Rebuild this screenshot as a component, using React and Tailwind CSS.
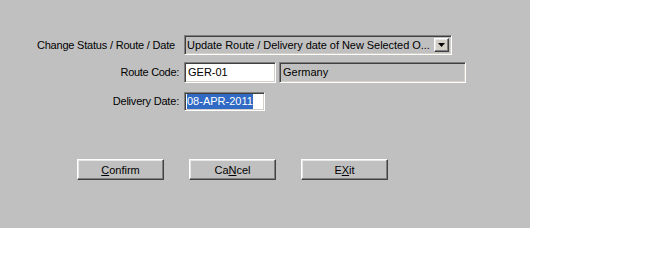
import React from "react";

const sunken =
  "border border-t-[#808080] border-l-[#808080] border-b-white border-r-white shadow-[inset_1px_1px_0_#404040,inset_-1px_-1px_0_#d4d0c8]";
const raised =
  "border border-t-white border-l-white border-b-[#404040] border-r-[#404040] shadow-[inset_-1px_-1px_0_#808080,inset_1px_1px_0_#e8e8e8]";

function Btn({ children }) {
  return (
    <button
      className={`w-[87px] h-[21px] bg-[#c0c0c0] ${raised} text-[11px] text-black flex items-center justify-center pt-[1px]`}
    >
      {children}
    </button>
  );
}

export default function App() {
  return (
    <div className="w-[667px] h-[255px] bg-white" style={{ fontFamily: '"Liberation Sans", Arial, sans-serif' }}>
      <div className="w-[530px] h-[228px] bg-[#c0c0c0] pt-[35px] text-[11px] text-black">
        <div className="flex items-center h-[20px]">
          <div className="w-[176px] text-right pr-[1px] tracking-[-0.2px]">Change Status / Route / Date</div>
          <div className={`ml-[8px] w-[268px] h-[20px] bg-[#c0c0c0] ${sunken} flex items-center pl-[2px] pr-[2px]`}>
            <span className="flex-1 whitespace-nowrap overflow-hidden tracking-[-0.05px]">Update Route / Delivery date of New Selected O...</span>
            <div className={`w-[15px] h-[14px] bg-[#d4d0c8] ${raised} flex items-center justify-center`}>
              <svg width="7" height="4" viewBox="0 0 7 4"><path d="M0 0h7L3.5 4z" fill="#000" /></svg>
            </div>
          </div>
        </div>
        <div className="flex items-center h-[21px] mt-[7px]">
          <div className="w-[179px] text-right tracking-[-0.3px]">Route Code:</div>
          <div className={`ml-[5px] w-[92px] h-[21px] bg-white ${sunken} flex items-center pl-[3px]`}>GER-01</div>
          <div className={`ml-[3px] w-[187px] h-[21px] bg-[#c0c0c0] ${sunken} flex items-center pl-[3px]`}>Germany</div>
        </div>
        <div className="flex items-center h-[19px] mt-[9px]">
          <div className="w-[179px] text-right tracking-[-0.2px]">Delivery Date:</div>
          <div className={`ml-[5px] w-[81px] h-[19px] bg-white ${sunken} flex items-center pl-[2px]`}>
            <span className="bg-[#316ac5] text-white leading-[15px]">08-APR-2011</span>
          </div>
        </div>
        <div className="flex mt-[48px] pl-[77px] gap-[25px]">
          <Btn><span><span className="underline">C</span>onfirm</span></Btn>
          <Btn><span>Ca<span className="underline">N</span>cel</span></Btn>
          <Btn><span>E<span className="underline">X</span>it</span></Btn>
        </div>
      </div>
    </div>
  );
}
